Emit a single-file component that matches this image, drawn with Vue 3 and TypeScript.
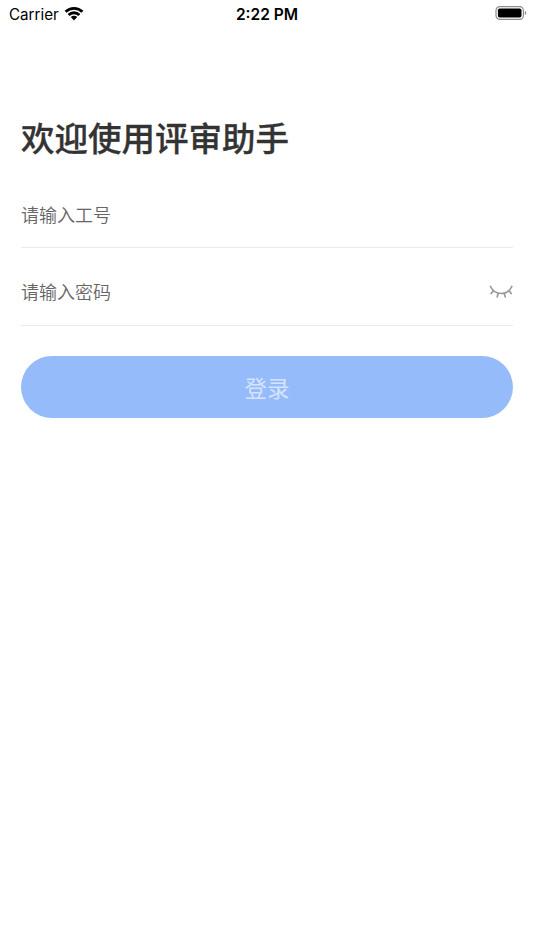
<script setup lang="ts">
import { ref } from 'vue'

const account = ref('')
const password = ref('')
</script>

<template>
  <main class="screen">
    <header class="status">
      <div class="carrier">
        <span>Carrier</span>
        <svg class="wifi" viewBox="0 0 20 15" width="20" height="15">
          <path d="M0.6 4.7a13.5 13.5 0 0 1 18.8 0l-2 2.1a10.6 10.6 0 0 0-14.8 0z" />
          <path d="M3.6 7.9a9.2 9.2 0 0 1 12.8 0l-2 2.1a6.2 6.2 0 0 0-8.8 0z" />
          <path d="M10 14.4l-3.200-3.300a4.600 4.600 0 0 1 6.400 0z" />
        </svg>
      </div>
      <span class="time">2:22 PM</span>
      <svg class="battery" viewBox="0 0 32 14" width="32" height="14">
        <rect x="1" y="0.6" width="27.4" height="12.8" rx="3.8" fill="none" stroke="#8c8c8c" stroke-width="1.2" />
        <rect x="2.9" y="2.4" width="23.6" height="9.2" rx="1.8" />
        <path d="M29.8 4.8c1.9.7 1.9 3.7 0 4.4z" fill="#8c8c8c" />
      </svg>
    </header>
    <h1>欢迎使用评审助手</h1>
    <form @submit.prevent>
      <label class="field">
        <input v-model="account" type="text" placeholder="请输入工号" />
      </label>
      <label class="field">
        <input v-model="password" type="password" placeholder="请输入密码" />
        <svg class="eye" viewBox="0 0 24 14" width="24" height="14">
          <path d="M1.500 1.500c4.300 9.300 17 9.300 21.300 0M4.500 5.600l-2.300 3M9.200 8.300l-1 3.500M15.200 8.300l1 3.500M19.900 5.600l2.300 3" />
        </svg>
      </label>
      <button type="submit">登录</button>
    </form>
  </main>
</template>

<style>
body {
  background: #fff;
}
</style>

<style scoped>
.screen {
  height: 950px;
  box-sizing: border-box;
  background: #fff;
  font-family: Inter, "Noto Sans CJK SC", sans-serif;
}
.status {
  display: grid;
  grid-template-columns: 1fr auto 1fr;
  align-items: center;
  height: 28px;
  padding: 0 7px 0 9px;
  font-size: 15.5px;
  color: #000;
}
.carrier {
  display: flex;
  align-items: center;
  gap: 5px;
  font-size: 15.2px;
}
.wifi {
  margin-top: -2px;
}
.time {
  margin-left: -2px;
  font-weight: 600;
}
.battery {
  justify-self: end;
  margin-top: -2px;
}
h1 {
  margin: 86px 21px 0;
  height: 50px;
  line-height: 50px;
  font-size: 33.5px;
  font-weight: 500;
  -webkit-text-stroke: 0.3px #333;
  color: #333;
}
form {
  margin: 6.5px 21px 0;
}
.field {
  display: flex;
  align-items: center;
  box-sizing: border-box;
  height: 77.5px;
  padding-top: 12px;
  border-bottom: 1px solid #ebebeb;
}
input {
  flex: 1;
  min-width: 0;
  margin-top: -2px;
  padding: 0;
  border: 0;
  outline: 0;
  background: none;
  font: 350 18px "Noto Sans CJK SC", sans-serif;
}
input::placeholder {
  color: #666;
}
.eye {
  fill: none;
  stroke: #999;
  stroke-width: 1.7;
  stroke-linecap: round;
}
button {
  display: block;
  width: 100%;
  height: 62px;
  margin-top: 30.5px;
  padding: 0;
  border: 0;
  border-radius: 31px;
  background: #96bbfb;
  color: #d5e4fd;
  font: 22.5px "Noto Sans CJK SC", sans-serif;
}
</style>
